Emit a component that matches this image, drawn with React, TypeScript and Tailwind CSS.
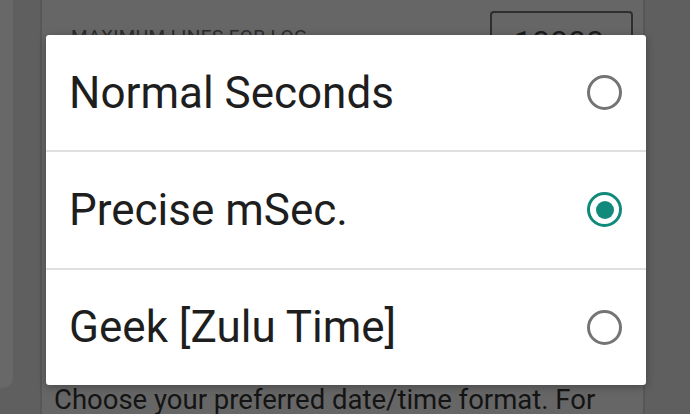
import React from 'react';

const options = [
  { id: 'normal', label: 'Normal Seconds' },
  { id: 'precise', label: 'Precise mSec.' },
  { id: 'geek', label: 'Geek [Zulu Time]' },
];

const Radio: React.FC<{ checked: boolean }> = ({ checked }) => (
  <div
    className={`w-[35px] h-[35px] rounded-full border-[3px] flex items-center justify-center ${
      checked ? 'border-[#118a7b]' : 'border-[#747474]'
    }`}
  >
    {checked && <div className="w-[18px] h-[18px] rounded-full bg-[#118a7b]" />}
  </div>
);

export default function App() {
  const selected = 'precise';

  return (
    <div className="relative w-[690px] h-[414px] overflow-hidden bg-[#5f5f5f] flex font-['Roboto',sans-serif]">
      {/* left edge of previous screen */}
      <div className="w-[13px] h-[388px] bg-[#686868] rounded-br-[10px] shrink-0" />
      <div className="w-[27px] shrink-0" />

      {/* settings card behind the dialog */}
      <div className="w-[605px] h-full bg-[#666666] border-x-2 border-[#575757] pl-3 pr-[10px] flex flex-col shrink-0">
        <div className="flex justify-between pt-[11px]">
          <div className="ml-[17px] mt-[15px] text-[19px] leading-[1.2] text-[#2b2b2b] tracking-[0.4px]">
            MAXIMUM LINES FOR LOG
          </div>
          <div className="w-[143px] h-[60px] border-2 border-[#2e2e2e] rounded-[4px] pl-[22px] pt-[10px] text-[32px] leading-[1.2] text-[#1c1c1c]">
            10000
          </div>
        </div>
        <div className="mt-[312px] text-[27.5px] leading-[1.2] text-[#141414] whitespace-nowrap">
          Choose your preferred date/time format. For
        </div>
      </div>

      {/* dialog */}
      <div className="absolute left-[46px] top-[35px] w-[600px] h-[350px] bg-white rounded-[3px] shadow-[0_2px_8px_rgba(0,0,0,0.3)] flex flex-col">
        {options.map((opt, i) => (
          <React.Fragment key={opt.id}>
            {i > 0 && <div className="h-[2px] bg-[#e0e0e0]" />}
            <div className="flex-1 flex items-center justify-between pl-[23px] pr-[24px]">
              <span className="text-[44px] leading-none text-[#1e1e1e]">{opt.label}</span>
              <Radio checked={opt.id === selected} />
            </div>
          </React.Fragment>
        ))}
      </div>
    </div>
  );
}
